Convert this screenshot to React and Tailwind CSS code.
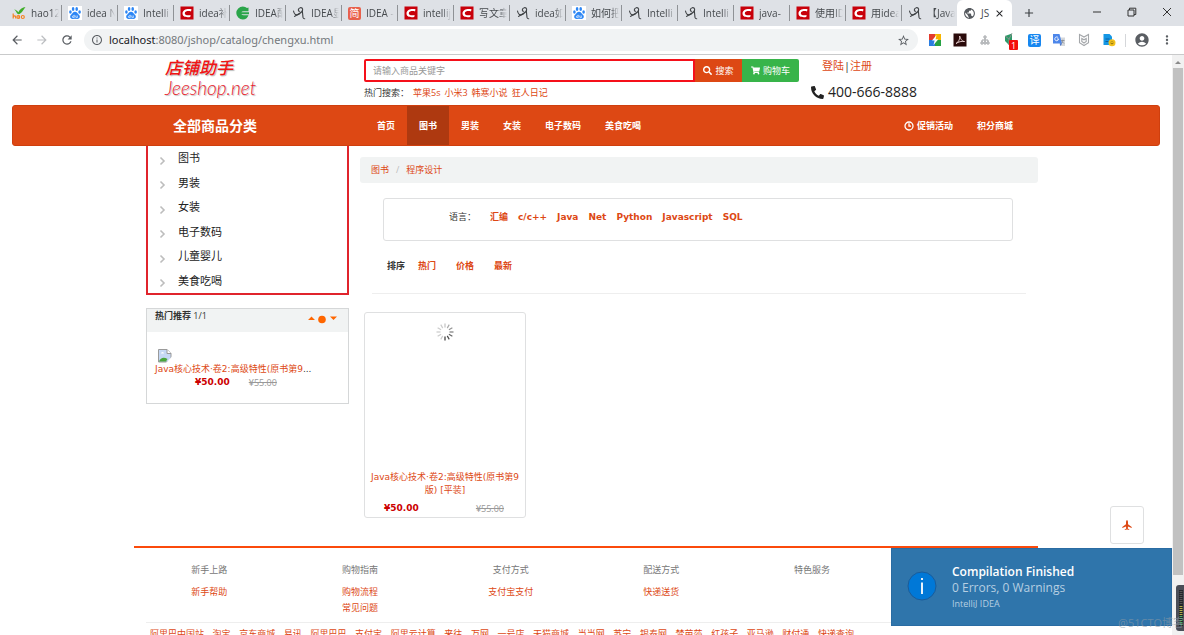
import React from "react";
import {
  MdArrowBack,
  MdArrowForward,
  MdRefresh,
  MdInfoOutline,
  MdStarBorder,
  MdAccountCircle,
  MdMoreVert,
  MdPublic,
  MdClose,
  MdAdd,
} from "react-icons/md";
import { FaSearch, FaShoppingCart, FaPhone } from "react-icons/fa";

/* ---------- favicons ---------- */

function HaoIcon() {
  return (
    <svg viewBox="0 0 14 14" className="size-[14px] shrink-0">
      <path d="M2 3.500C4 3.500 5.500 5 6.300 6.300 8 3 10.500 1.200 13.500 1 11.500 3.500 9.500 8 6.500 8.200 4.500 8 4.500 5 2 3.500Z" fill="#3fae29" />
      <path d="M1.200 7.500V12.500M1.200 10.500Q3.800 8.600 3.800 12.500M7.300 9.500V12.600" fill="none" stroke="#f58220" strokeWidth="1.200" />
      <circle cx="6.200" cy="11" r="1.300" fill="none" stroke="#f58220" strokeWidth="1.200" />
      <circle cx="10.800" cy="11" r="1.500" fill="none" stroke="#f58220" strokeWidth="1.200" />
    </svg>
  );
}

function PawIcon() {
  return (
    <svg viewBox="0 0 14 14" className="size-[14px] shrink-0">
      <rect width="14" height="14" fill="#fff" />
      <g fill="#2c86f5">
        <ellipse cx="2.400" cy="6" rx="1.300" ry="1.800" />
        <ellipse cx="5.100" cy="3" rx="1.300" ry="1.900" />
        <ellipse cx="8.700" cy="3" rx="1.300" ry="1.900" />
        <ellipse cx="11.600" cy="6" rx="1.300" ry="1.800" />
        <path d="M7 5.800C9 5.800 9.500 7.700 10.900 8.800 12.600 10.200 11.800 13 9.500 13 8.500 13 8 12.700 7 12.700S5.500 13 4.500 13C2.200 13 1.400 10.200 3.100 8.800 4.500 7.700 5 5.800 7 5.800Z" />
      </g>
      <path d="M6.200 8.800v2.800H5.200a.8.8 0 0 1 0-1.700h1M7.800 9.500v1.600q0 .6.6.6h.9V9.500" fill="none" stroke="#fff" strokeWidth=".7" />
    </svg>
  );
}

function RedCIcon() {
  return (
    <svg viewBox="0 0 14 14" className="size-[14px] shrink-0">
      <rect x=".5" y=".5" width="13" height="13" fill="#c8000a" />
      <path d="M11.500 3.200 11 5.400C9 4.800 5 4.900 4.800 7.200 4.700 9.400 8 9.500 10.600 8.900L10.300 11C6 11.700 2.400 10.800 2.500 7.300 2.700 3.600 7 2.400 11.500 3.200Z" fill="#fff" />
    </svg>
  );
}

function GreenCIcon() {
  return (
    <svg viewBox="0 0 14 14" className="size-[14px] shrink-0">
      <path d="M12.500 1.500V5.300H8.800Q6 5 5.300 6.200H13V8.200H5.300Q6 9.600 8.800 9.300H12.500Q11 13.500 6.800 13.500A6.500 6.500 0 0 1 6.800.500Q9.500.500 11 2Z" fill="#2aa54a" />
    </svg>
  );
}

function ScriptIcon() {
  return (
    <svg viewBox="0 0 14 14" className="size-[14px] shrink-0" fill="none" stroke="#3d4043" strokeWidth="1.100" strokeLinecap="round">
      <path d="M1.500 5C2.200 8.500 3.800 9.800 7 8.200" />
      <path d="M7.600 5.200C6 5.800 5.600 2.200 8.300 1.700 11 1.400 11.400 4.300 9.500 6 8 7.600 4.500 9.200 2.500 10.400" />
      <path d="M10.300 4.500 11 11.500Q11.200 12.800 12.700 12.800" />
    </svg>
  );
}

function JianIcon() {
  return (
    <span className="flex size-[13px] shrink-0 items-center justify-center rounded-[2px] bg-[#e8604c] text-[10px] leading-none text-white">
      简
    </span>
  );
}

const tabs = [
  [HaoIcon, "hao12"],
  [PawIcon, "idea N"],
  [PawIcon, "Intelli"],
  [RedCIcon, "idea补"],
  [GreenCIcon, "IDEA配"],
  [ScriptIcon, "IDEA显"],
  [JianIcon, "IDEA -"],
  [RedCIcon, "intellij"],
  [RedCIcon, "写文章"],
  [ScriptIcon, "idea如"],
  [PawIcon, "如何把"],
  [ScriptIcon, "Intelli"],
  [ScriptIcon, "Intelli"],
  [RedCIcon, "java-"],
  [RedCIcon, "使用ID"],
  [RedCIcon, "用idea"],
  [ScriptIcon, "【Java"],
];

function TabStrip() {
  return (
    <div className="grid h-[26px] shrink-0 grid-cols-[1012fr_172fr] bg-[#dee1e6]">
      <div className="flex min-w-0 items-stretch pl-[6px]">
        {tabs.map(([Icon, label], i) => (
          <div
            key={i}
            className={
              "my-[5px] flex min-w-0 flex-1 basis-0 items-center gap-[5px] pl-[6px] text-[#45494d]" +
              (i < tabs.length - 1 ? " border-r border-[#8f9296]" : "")
            }
          >
            <Icon />
            <span className="w-[28px] overflow-hidden whitespace-nowrap text-[10px] leading-4 [mask-image:linear-gradient(to_right,#000_70%,transparent)]">
              {label}
            </span>
          </div>
        ))}
        <div className="flex min-w-0 flex-1 basis-0 items-center rounded-t-[6px] bg-white pl-[6px] text-[#45494d]">
          <MdPublic className="size-[13px] shrink-0 text-[#55595e]" />
          <span className="ml-[5px] text-[10px] leading-4">JS</span>
          <button aria-label="关闭标签页" className="ml-[5px]">
            <MdClose className="size-[11px] text-[#202124]" />
          </button>
        </div>
      </div>
      <div className="flex items-center pr-[12px] pl-[10px] text-[#3c4043]">
        <button aria-label="新标签页">
          <MdAdd className="size-[14px]" />
        </button>
        <div className="ml-auto flex items-center gap-[25px] pb-[2px]">
          <button aria-label="最小化">
            <svg viewBox="0 0 10 10" className="size-[10px]">
              <path d="M1 5h8" stroke="#333" />
            </svg>
          </button>
          <button aria-label="还原">
            <svg viewBox="0 0 10 10" className="size-[10px]" fill="none" stroke="#333" strokeWidth="1">
              <path d="M1 3h6v6H1zM2.500 3V1.200h6.300V7.500H7" />
            </svg>
          </button>
          <button aria-label="关闭">
            <svg viewBox="0 0 10 10" className="size-[10px]" fill="none" stroke="#333" strokeWidth="1">
              <path d="M1 1l8 8M9 1l-8 8" />
            </svg>
          </button>
        </div>
      </div>
    </div>
  );
}

function Extensions() {
  return (
    <div className="flex items-center gap-[11px]">
      <svg viewBox="0 0 14 14" className="size-[14px]">
        <path d="M1 1h6v6H1z" fill="#e33b2e" />
        <path d="M7 1h6v6H7z" fill="#f7b500" />
        <path d="M1 7h6v6H1z" fill="#2a7de1" />
        <path d="M7 7h6v6H7z" fill="#27a243" />
        <path d="M8.500 2 4 7.600h2.600L5.500 12 10.300 6.300H7.600z" fill="#fff" />
      </svg>
      <svg viewBox="0 0 14 14" className="size-[14px]">
        <rect x=".5" y=".5" width="13" height="13" fill="#2b0b0b" />
        <path d="M3 10.500C5 9.500 7.600 5.500 6.600 3 8 7 9.500 8.500 11.500 8.500 8.500 8 5.500 8.800 3 10.500Z" fill="none" stroke="#f3dcdc" strokeWidth=".9" />
      </svg>
      <svg viewBox="0 0 14 14" className="size-[14px]" fill="none" stroke="#a0a3a6">
        <path d="M6 3h2v2H6zM3 9h2v2H3zM6 9h2v2H6zM9 9h2v2H9zM7 5v4M4 9V7h6v2" />
      </svg>
      <span className="relative">
        <svg viewBox="0 0 14 14" className="size-[14px]">
          <path d="M2 3l7-2.500V11L7 13 2 8z" fill="#2c9a68" />
          <path d="M2 3l4 3 3-5.500M6 6v6" stroke="#8a8f8d" fill="none" />
        </svg>
        <span className="absolute top-[7px] left-[6px] flex h-[10px] w-[9px] items-center justify-center rounded-[1px] bg-[#f40d0d] text-[9px] leading-none text-white">
          1
        </span>
      </span>
      <span className="flex h-[13px] w-[13px] items-center justify-center rounded-[2px] bg-[#1787f0] text-[10px] leading-none text-white">
        译
      </span>
      <svg viewBox="0 0 14 14" className="size-[14px]">
        <path d="M6 4.500h7V13H8z" fill="#d5d8dc" />
        <path d="M1 1h6.500L10 10.500H1z" fill="#4c86ea" />
        <path d="M8 10.500h2L8.500 13z" fill="#2c5fc4" />
        <path d="M6.200 4.700A1.900 1.900 0 1 0 6.600 6H5" fill="none" stroke="#fff" strokeWidth=".9" />
        <path d="M9 7.500h3.500M10.800 6.700v.8q0 1.500-1 2.700M10 8.500l2 2" fill="none" stroke="#7d8288" strokeWidth=".7" />
      </svg>
      <svg viewBox="0 0 14 14" className="size-[14px]" fill="none" stroke="#a4a7aa" strokeWidth="1.100">
        <path d="M2.500 1.500 7 4 11.500 1.500v8.200L7 12.500 2.500 9.700zM4.800 5.500v3L7 10l2.200-1.500v-3L7 6.800z" />
      </svg>
      <svg viewBox="0 0 14 14" className="size-[14px]">
        <path d="M1.500 1h6L10 3.500V12H1.500z" fill="#1597e5" />
        <path d="M3.500 6h4M3.500 8.500h3" stroke="#0b5fa0" />
        <circle cx="10" cy="9.700" r="3.500" fill="#f2c11d" />
        <path d="M8.500 10q1.500 2 3 0M8.900 8.700h.6M10.500 8.700h.6" stroke="#5c4a08" strokeWidth=".7" fill="none" />
      </svg>
    </div>
  );
}

function Toolbar() {
  return (
    <div className="flex h-[29px] shrink-0 items-center border-b border-[#c9cacb] bg-white pr-[10px] pl-[10px] text-[#5a5e63]">
      <button aria-label="后退" className="w-[25px]">
        <MdArrowBack className="size-[14px]" />
      </button>
      <button aria-label="前进" className="w-[25px] text-[#bcbec1]">
        <MdArrowForward className="size-[14px]" />
      </button>
      <button aria-label="重新加载" className="w-[24px]">
        <MdRefresh className="size-[14px]" />
      </button>
      <div className="flex h-[22px] flex-1 items-center rounded-full bg-[#f1f3f4] pr-[8px] pl-[7px]">
        <MdInfoOutline className="size-[12px]" />
        <span className="ml-[6px] flex-1 font-['Noto_Sans',sans-serif] text-[11px] leading-5 text-[#74787c]">
          <span className="text-[#202124]">localhost</span>:8080/jshop/catalog/chengxu.html
        </span>
        <MdStarBorder className="size-[13px]" />
      </div>
      <div className="ml-[10px]">
        <Extensions />
      </div>
      <span className="mr-[8px] ml-[9px] h-[13px] w-px bg-[#d5d7da]" />
      <button aria-label="用户">
        <MdAccountCircle className="size-[16px]" />
      </button>
      <button aria-label="菜单" className="ml-[10px]">
        <MdMoreVert className="size-[14px]" />
      </button>
    </div>
  );
}

/* ---------- shop page ---------- */

function Container({ className = "", children }) {
  return <div className={"mx-auto w-full max-w-[904px] " + className}>{children}</div>;
}

function SiteHeader() {
  return (
    <Container className="flex h-[50px]">
      <a href="#" className="block w-1/4 pt-[3px] pl-[31px] text-[#e8202a] italic [text-shadow:1px_1px_1px_#bbb]">
        <span className="block text-[17px] leading-5 font-medium text-[#f01414]">店铺助手</span>
        <span className="block font-['Lato',sans-serif] text-[19px] leading-5 font-light">Jeeshop.net</span>
      </a>
      <div className="ml-[4px] w-[435px] pt-[4px]">
        <form className="flex h-[23px]" onSubmit={(e) => e.preventDefault()}>
          <input
            aria-label="商品关键字"
            placeholder="请输入商品关键字"
            className="min-w-0 flex-1 rounded-l-[2px] border-2 border-[#f5101a] bg-white px-[7px] text-[9px] placeholder:text-[#999]"
          />
          <button className="flex w-[47px] items-center justify-center gap-[3px] bg-[#dd4814] text-[9px] text-white">
            <FaSearch className="size-[9px]" />
            搜索
          </button>
          <button type="button" className="flex w-[57px] items-center justify-center gap-[3px] rounded-r-[2px] bg-[#38b44a] text-[9px] text-white">
            <FaShoppingCart className="size-[9px]" />
            购物车
          </button>
        </form>
        <p className="mt-[3px] flex gap-[4px] text-[9px] leading-4 text-[#dd4814]">
          <span className="text-[#333]">热门搜索：</span>
          <a href="#">苹果5s</a>
          <a href="#">小米3</a>
          <a href="#">韩寒小说</a>
          <a href="#">狂人日记</a>
        </p>
      </div>
      <div className="ml-[12px] pt-[3px]">
        <p className="pl-[11px] text-[11px] leading-4 text-[#333]">
          <a href="#" className="text-[#dd4814]">登陆</a>|<a href="#" className="text-[#dd4814]">注册</a>
        </p>
        <p className="mt-[8px] flex items-center gap-[4px] text-[14px] leading-5 text-[#222]">
          <FaPhone className="size-[13px] -scale-x-100" />
          400-666-8888
        </p>
      </div>
    </Container>
  );
}

const navItems = ["首页", "图书", "男装", "女装", "电子数码", "美食吃喝"];

function NavBar() {
  return (
    <nav className="mx-3 h-[41px] rounded-[3px] border border-[#cf3f0e] bg-[#dd4814] text-white">
      <Container className="flex h-full items-stretch text-[9px] font-bold">
        <a href="#" className="flex w-[231px] items-center pl-[39px] text-[14px]">全部商品分类</a>
        {navItems.map((t) => (
          <a key={t} href="#" className={"flex items-center px-3" + (t === "图书" ? " bg-[#ae3910]" : "")}>
            {t}
          </a>
        ))}
        <div className="ml-auto flex items-center gap-6 pr-[25px]">
          <a href="#" className="flex items-center gap-[3px]">
            <svg viewBox="0 0 10 10" className="size-[10px]" fill="none" stroke="#fff" strokeWidth="1.300">
              <circle cx="5" cy="5" r="4" />
              <path d="M5 2.300V5.200h2" />
            </svg>
            促销活动
          </a>
          <a href="#">积分商城</a>
        </div>
      </Container>
    </nav>
  );
}

const categories = ["图书", "男装", "女装", "电子数码", "儿童婴儿", "美食吃喝"];

function Sidebar() {
  return (
    <aside className="w-1/4 pr-[11px] pl-3">
      <ul className="flex h-[149px] flex-col border-x-2 border-b-2 border-[#e0242c] text-[11px] text-[#222]">
        {categories.map((c) => (
          <li key={c} className="flex flex-1 basis-0 items-center">
            <a href="#" className="flex items-center pl-[10px]">
              <svg viewBox="0 0 8 10" className="mt-[5px] mr-[12px] h-[10px] w-[8px]" fill="none" stroke="#bdbdbd" strokeWidth="1.600">
                <path d="M2.500 1.500 6 5 2.500 8.500" />
              </svg>
              {c}
            </a>
          </li>
        ))}
      </ul>
      <section className="mt-[13px] h-[96px] border border-[#d5d7d8]">
        <header className="flex h-[23px] justify-between bg-[#f1f3f3] pr-[10px] pl-2 text-[9px] leading-[14px] text-[#333]">
          <h2>
            <b>热门推荐</b> 1/1
          </h2>
          <svg viewBox="0 0 30 10" className="mt-[5px] h-[10px] w-[30px]" fill="#ff6600">
            <path d="M0 6 3.500 2.500 7 6zM22 2.500h7L25.500 6z" />
            <circle cx="14" cy="5.500" r="3.800" />
          </svg>
        </header>
        <div className="px-2 pt-[17px] text-[9px] leading-[13px]">
          <svg viewBox="0 0 14 14" className="ml-[3px] size-[14px]">
            <path d="M.5.500h8.500l4 4v8.500H.5z" fill="#c6d8f5" stroke="#9a9a9a" />
            <path d="M9 .5v4h4" fill="#fff" stroke="#9a9a9a" />
            <path d="M1 12.500C2.500 8.500 6 8 9.500 10L8 12.500z" fill="#4aa53c" />
            <path d="M8 14 14 7.500V14z" fill="#fff" />
            <path d="M3 4.500a1.500 1.500 0 0 1 3 0z" fill="#fff" />
          </svg>
          <a href="#" className="block font-['DejaVu_Sans','Noto_Sans_CJK_SC',sans-serif] whitespace-nowrap text-[#dd4814]">
            Java核心技术·卷2:高级特性(原书第9<span className="text-[#333]">...</span>
          </a>
          <p className="flex gap-[19px] pl-[40px]">
            <b className="font-['DejaVu_Sans',sans-serif] text-[#cc0000]">¥50.00</b>
            <s className="text-[#999]">¥55.00</s>
          </p>
        </div>
      </section>
    </aside>
  );
}

const spokes = [0, 30, 60, 90, 120, 150, 180, 210, 240, 270, 300, 330];

function Spinner() {
  return (
    <svg viewBox="0 0 18 18" className="mx-auto size-[18px]" stroke="#333" strokeWidth="1.200">
      {spokes.map((a) => (
        <path key={a} d="M9 .5v4" transform={`rotate(${a} 9 9)`} opacity={a <= 180 ? 0.3 + a / 260 : 0.25} />
      ))}
    </svg>
  );
}

const languages = ["汇编", "c/c++", "Java", "Net", "Python", "Javascript", "SQL"];

function Main() {
  return (
    <main className="w-3/4 pt-[11px] text-[9px] text-[#dd4814]">
      <nav className="flex h-[26px] items-center gap-[7px] rounded-[3px] bg-[#f1f3f3] px-[11px]">
        <a href="#">图书</a>
        <span className="text-[#bbb]">/</span>
        <a href="#">程序设计</a>
      </nav>
      <section className="mr-[25px] ml-[23px] mt-[15px] flex h-[43px] gap-[10px] rounded-[3px] border border-[#dfe0e1] pt-[10px] pl-[65px] font-['DejaVu_Sans','Noto_Sans_CJK_SC',sans-serif] leading-4 font-bold">
        <span className="mr-[4px] font-normal text-[#333]">语言：</span>
        {languages.map((l) => (
          <a key={l} href="#">{l}</a>
        ))}
      </section>
      <div className="mx-[12px] mt-[17px] flex h-[36px] gap-[20px] border-b border-[#eee] pl-[15px] leading-4 font-bold">
        <span className="-mr-[7px] text-[#333]">排序</span>
        <a href="#">热门</a>
        <a href="#">价格</a>
        <a href="#">最新</a>
      </div>
      <article className="mt-[18px] ml-[4px] flex h-[206px] w-[162px] flex-col rounded-[3px] border border-[#dfe0e1] px-[4px] pt-[10px]">
        <Spinner />
        <a href="#" className="mt-[130px] block text-center font-['DejaVu_Sans','Noto_Sans_CJK_SC',sans-serif] leading-[13px]">
          Java核心技术·卷2:高级特性(原书第9版) [平装]
        </a>
        <p className="mt-[5px] flex justify-between pr-[17px] pl-[15px] leading-[13px]">
          <b className="font-['DejaVu_Sans',sans-serif] text-[#cc0000]">¥50.00</b>
          <s className="text-[#999]">¥55.00</s>
        </p>
      </article>
    </main>
  );
}

const footerCols = [
  ["新手上路", ["新手帮助"]],
  ["购物指南", ["购物流程", "常见问题"]],
  ["支付方式", ["支付宝支付"]],
  ["配送方式", ["快递送货"]],
  ["特色服务", []],
];

const friendLinks = [
  "阿里巴中国站", "淘宝", "京东商城", "易讯", "阿里巴巴", "支付宝", "阿里云计算", "来往", "万网", "一号店",
  "天猫商城", "当当网", "苏宁", "银泰网", "梦芭莎", "红孩子", "亚马逊", "财付通", "快递查询",
];

function Footer() {
  return (
    <Container className="mt-[28px] border-t-2 border-[#fb4a0b] text-[9px] leading-4">
      <div className="grid grid-cols-6 pt-[14px] text-center">
        {footerCols.map(([title, links]) => (
          <div key={title}>
            <h3 className="mb-[6px] text-[#777]">{title}</h3>
            {links.map((l) => (
              <a key={l} href="#" className="block text-[#dd4814]">{l}</a>
            ))}
          </div>
        ))}
      </div>
      <div className="mx-3 mt-[6px] border-t border-[#eee] pt-[3px] pl-[4px]">
        <div className="flex max-w-[704px] justify-between whitespace-nowrap text-[#dd4814]">
          {friendLinks.map((l) => (
            <a key={l} href="#">{l}</a>
          ))}
        </div>
      </div>
    </Container>
  );
}

function Scrollbar() {
  return (
    <div className="flex w-3 shrink-0 flex-col bg-[#f1f1f1]">
      <svg viewBox="0 0 12 13" className="h-[13px] w-3" fill="#8a8a8a">
        <path d="M3 9 6 6l3 3z" />
      </svg>
      <div className="mx-px h-[507px] bg-[#c1c1c1]" />
    </div>
  );
}

function Toast() {
  return (
    <div className="absolute right-3 bottom-[9px] flex h-[78px] w-[281px] items-start border border-[#2a6ca3] bg-[#2f75ab] pl-[15px] text-white">
      <svg viewBox="0 0 30 30" className="mt-[22px] size-[30px]">
        <circle cx="15" cy="15" r="14" fill="#0078d7" stroke="#1b5c99" />
        <path d="M15 7v2M15 11.500V23" stroke="#fff" strokeWidth="1.800" />
      </svg>
      <div className="pt-[15px] pl-[15px]">
        <p className="text-[12px] leading-4 font-semibold">Compilation Finished</p>
        <p className="text-[12px] leading-4 text-[#b6cfe2]">0 Errors, 0 Warnings</p>
        <p className="text-[9px] leading-4 text-[#b6cfe2]">IntelliJ IDEA</p>
      </div>
    </div>
  );
}

export default function App() {
  return (
    <div className="relative flex h-screen flex-col overflow-hidden bg-white font-['Open_Sans','Noto_Sans_CJK_SC',sans-serif]">
      <TabStrip />
      <Toolbar />
      <div className="flex min-h-0 flex-1">
        <div className="min-w-0 flex-1 overflow-hidden">
          <SiteHeader />
          <NavBar />
          <Container className="flex">
            <Sidebar />
            <Main />
          </Container>
          <Footer />
        </div>
        <Scrollbar />
      </div>
      <button aria-label="返回顶部" className="absolute right-[40px] bottom-[91px] flex h-[38px] w-[34px] items-center justify-center rounded-[3px] border border-[#dfe0e1] bg-white">
        <svg viewBox="0 0 10 10" className="size-[10px]" fill="#dd4814">
          <path d="M5 0Q6 .6 6 2V4.200L9.700 7V8L6 6.600 5.800 8.500 7.300 9.500V10L5 9.600 2.700 10V9.500L4.200 8.500 4 6.600.3 8V7L4 4.200V2Q4 .6 5 0Z" />
        </svg>
      </button>
      <Toast />
      <svg viewBox="0 0 8 46" className="absolute right-0 bottom-[4px] h-[46px] w-[8px]">
        <path d="M3 0H8V46H3Q0 46 0 43V3Q0 0 3 0Z" fill="#4a4d57" />
        <path d="M3 5h4v36H3z" fill="#23252b" />
        <path d="M5 6v14" stroke="#555" strokeWidth="3" strokeDasharray="1 1" />
        <path d="M5 21v10" stroke="#b5b04a" strokeWidth="3" strokeDasharray="1 1" />
        <path d="M5 31v9" stroke="#4fb06a" strokeWidth="3" strokeDasharray="1 1" />
      </svg>
      <span className="absolute right-0 bottom-[4px] text-[11px] leading-4 whitespace-nowrap text-[#8d9aa5]/60">@51CTO博客</span>
    </div>
  );
}
